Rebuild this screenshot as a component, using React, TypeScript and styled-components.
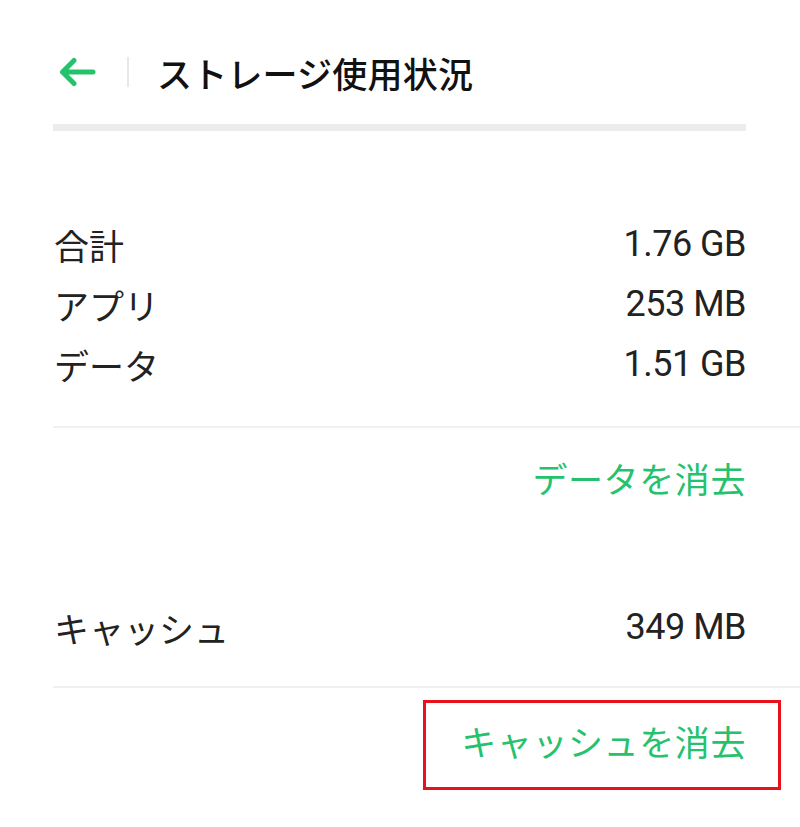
import React from "react";
import styled, { createGlobalStyle } from "styled-components";

const GREEN = "#25c26e";

const Global = createGlobalStyle`
  html, body { margin: 0; padding: 0; background: #ffffff; }
  body {
    font-family: Roboto, "Noto Sans CJK JP", "Noto Sans", sans-serif;
    color: #222222;
  }
`;

const Page = styled.div`
  width: 800px;
  min-height: 827px;
  background: #ffffff;
  overflow: hidden;
`;

const Header = styled.header`
  display: flex;
  align-items: center;
  height: 64px;
  padding: 40px 0 0 58px;
`;

const BackButton = styled.button`
  display: flex;
  align-items: center;
  justify-content: center;
  width: 40px;
  height: 30px;
  padding: 0;
  border: 0;
  background: transparent;
  cursor: pointer;
`;

const VSep = styled.span`
  width: 2px;
  height: 30px;
  margin-left: 29px;
  background: #e8e8e8;
`;

const Title = styled.h1`
  margin: 0 0 0 28px;
  font-size: 35px;
  font-weight: 500;
  color: #111111;
  letter-spacing: 0.2px;
`;

const ThickBar = styled.div`
  height: 7px;
  margin: 20px 54px 0 53px;
  background: #ececec;
`;

const Stats = styled.section`
  display: flex;
  flex-direction: column;
  margin-top: 83px;
`;

const Row = styled.div<{ $gap?: number }>`
  display: flex;
  align-items: center;
  justify-content: space-between;
  height: 60px;
  padding: 0 54px 0 54px;
  margin-top: ${(p) => p.$gap ?? 0}px;
  font-size: 35px;
  color: #222222;
`;

const Label = styled.span`
  font-family: "Noto Sans CJK JP", sans-serif;
  font-weight: 400;
`;

const Value = styled.span`
  font-family: Roboto, sans-serif;
  font-size: 36px;
  letter-spacing: -0.5px;
`;

const Divider = styled.hr<{ $gap: number }>`
  height: 2px;
  margin: ${(p) => p.$gap}px 0 0 53px;
  border: 0;
  background: #f0f0f0;
`;

const ActionRow = styled.div<{ $gap: number }>`
  display: flex;
  justify-content: flex-end;
  padding-right: 19px;
  margin-top: ${(p) => p.$gap}px;
`;

const ActionButton = styled.button<{ $highlighted?: boolean }>`
  display: flex;
  align-items: center;
  box-sizing: border-box;
  height: 90px;
  padding: 0 32px 10px 35px;
  border: 3px solid ${(p) => (p.$highlighted ? "#e8121c" : "transparent")};
  background: transparent;
  font-family: "Noto Sans CJK JP", sans-serif;
  font-size: 35px;
  font-weight: 400;
  letter-spacing: 0.6px;
  color: ${GREEN};
  cursor: pointer;
`;

const BackArrow = () => (
  <svg width="40" height="30" viewBox="0 0 40 30" fill="none">
    <path
      d="M35 15H5M16 3.5L4.5 15L16 26.5"
      stroke={GREEN}
      strokeWidth="5"
      strokeLinecap="round"
      strokeLinejoin="round"
    />
  </svg>
);

const stats = [
  { label: "合計", value: "1.76 GB" },
  { label: "アプリ", value: "253 MB" },
  { label: "データ", value: "1.51 GB" },
];

export default function App() {
  return (
    <Page>
      <Global />
      <Header>
        <BackButton aria-label="戻る">
          <BackArrow />
        </BackButton>
        <VSep />
        <Title>ストレージ使用状況</Title>
      </Header>
      <ThickBar />
      <Stats>
        {stats.map((s) => (
          <Row key={s.label}>
            <Label>{s.label}</Label>
            <Value>{s.value}</Value>
          </Row>
        ))}
      </Stats>
      <Divider $gap={32} />
      <ActionRow $gap={9}>
        <ActionButton>データを消去</ActionButton>
      </ActionRow>
      <Row $gap={70}>
        <Label>キャッシュ</Label>
        <Value>349 MB</Value>
      </Row>
      <Divider $gap={29} />
      <ActionRow $gap={12}>
        <ActionButton $highlighted>キャッシュを消去</ActionButton>
      </ActionRow>
    </Page>
  );
}
